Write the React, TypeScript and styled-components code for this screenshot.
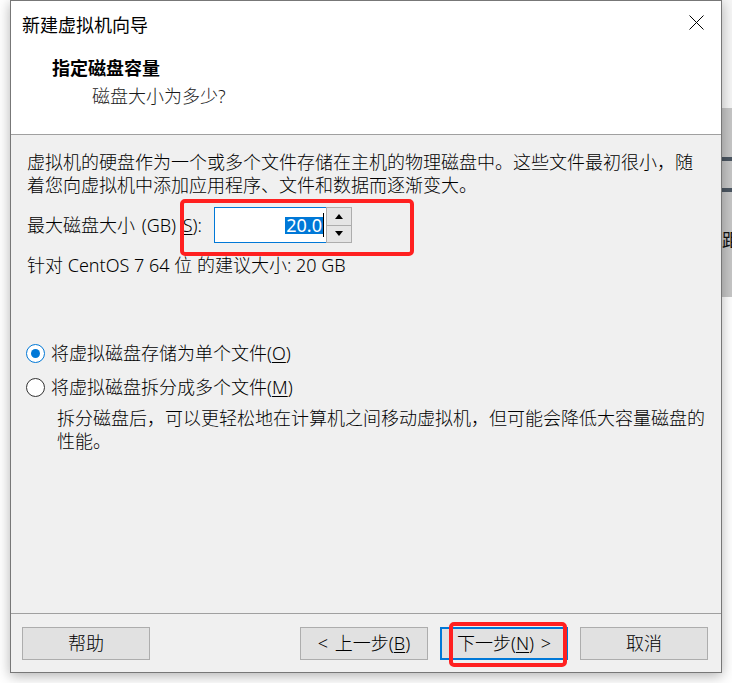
import React from "react";
import styled, { createGlobalStyle } from "styled-components";

const GlobalStyle = createGlobalStyle`
  html, body {
    margin: 0;
    padding: 0;
    background: #ffffff;
  }
  body {
    font-family: "Noto Sans", "Noto Sans CJK SC", sans-serif;
    font-size: 18px;
    font-weight: 300;
    color: #000000;
  }
  #root {
    width: 732px;
    height: 683px;
    overflow: hidden;
  }
`;

const Desktop = styled.div`
  display: flex;
  width: 732px;
  height: 683px;
  padding-left: 10px;
  box-sizing: border-box;
  background: #ffffff;
  overflow: hidden;
`;

const Window = styled.div`
  position: relative;
  z-index: 1;
  flex-shrink: 0;
  width: 712px;
  height: 673px;
  box-sizing: border-box;
  border: 1px solid #777777;
  background: #f0f0f0;
  display: flex;
  flex-direction: column;
  box-shadow: 0 3px 12px rgba(0, 0, 0, 0.3);
`;

const Header = styled.div`
  flex-shrink: 0;
  height: 134px;
  box-sizing: border-box;
  background: #ffffff;
  border-bottom: 1px solid #a0a0a0;
  display: flex;
  flex-direction: column;
`;

const TitleBar = styled.div`
  height: 46px;
  display: flex;
  align-items: center;
  justify-content: space-between;
  padding: 0 17px 0 11px;
`;

const TitleText = styled.span`
  font-family: "Noto Sans CJK SC", sans-serif;
  font-size: 18px;
  font-weight: 400;
  line-height: 24px;
  color: #000;
`;

const CloseIcon = styled.svg`
  display: block;
  margin-top: -3px;
`;

const PageHeading = styled.div`
  margin-top: 7px;
  padding-left: 41px;
  font-weight: 700;
  line-height: 28px;
`;

const PageSubheading = styled.div`
  padding-left: 81px;
  line-height: 28px;
  color: #1a1a1a;
`;

const Body = styled.div`
  flex: 1;
  padding: 16px 13px 0 16px;
  display: flex;
  flex-direction: column;
`;

const Paragraph = styled.p`
  margin: 0;
  line-height: 23px;
`;

const SizeRow = styled.div`
  margin-top: 10px;
  height: 36px;
  display: flex;
  align-items: center;
`;

const SizeLabel = styled.label`
  flex-shrink: 0;
  width: 187px;
  line-height: 23px;
  white-space: nowrap;
  word-spacing: 2px;
`;

const SpinBox = styled.div`
  display: flex;
  height: 36px;
`;

const NumberField = styled.div`
  width: 112px;
  box-sizing: border-box;
  border: 1px solid #0078d7;
  border-right: none;
  background: #ffffff;
  display: flex;
  align-items: center;
  justify-content: flex-end;
  padding-right: 2px;
`;

const SelectedValue = styled.span`
  display: inline-block;
  background: #0078d7;
  color: #ffffff;
  font-weight: 400;
  line-height: 17px;
  height: 17px;
  padding: 0 1px;
`;

const Caret = styled.span`
  display: inline-block;
  width: 1px;
  height: 24px;
  background: #000;
`;

const SpinButtons = styled.div`
  width: 26px;
  display: flex;
  flex-direction: column;
`;

const SpinButton = styled.div<{ $down?: boolean }>`
  flex: 1;
  box-sizing: border-box;
  border: 1px solid #adadad;
  border-top: ${(p) => (p.$down ? "none" : "1px solid #adadad")};
  background: #e5e5e5;
  display: flex;
  align-items: center;
  justify-content: center;
  &::after {
    content: "";
    width: 0;
    height: 0;
    border-left: 4px solid transparent;
    border-right: 4px solid transparent;
    ${(p) =>
      p.$down
        ? "border-top: 5px solid #000;"
        : "border-bottom: 5px solid #000;"}
  }
`;

const Recommendation = styled.div`
  margin-top: 11px;
  line-height: 23px;
`;

const RadioGroup = styled.div`
  margin-top: 63px;
  display: flex;
  flex-direction: column;
  gap: 8px;
`;

const RadioRow = styled.label`
  height: 26px;
  display: flex;
  align-items: center;
  gap: 6px;
  margin-left: -1px;
`;

const RadioDot = styled.span<{ $checked?: boolean }>`
  flex-shrink: 0;
  width: 19px;
  height: 19px;
  box-sizing: border-box;
  border-radius: 50%;
  border: 1px solid ${(p) => (p.$checked ? "#0078d7" : "#333333")};
  background: #ffffff;
  display: flex;
  align-items: center;
  justify-content: center;
  &::after {
    content: "";
    display: ${(p) => (p.$checked ? "block" : "none")};
    width: 9px;
    height: 9px;
    border-radius: 50%;
    background: #0078d7;
  }
`;

const RadioText = styled.span`
  line-height: 23px;
  white-space: nowrap;
`;

const Description = styled.p`
  margin: 7px 0 0 0;
  padding-left: 30px;
  line-height: 23px;
`;

const Footer = styled.div`
  flex-shrink: 0;
  height: 59px;
  box-sizing: border-box;
  border-top: 1px solid #a0a0a0;
  padding: 13px 13px 0 11px;
  display: flex;
  align-items: flex-start;
  gap: 12px;
`;

const Button = styled.button<{ $default?: boolean; $pushRight?: boolean }>`
  width: 128px;
  height: 33px;
  box-sizing: border-box;
  margin: 0;
  margin-left: ${(p) => (p.$pushRight ? "auto" : "0")};
  padding: 0;
  border: ${(p) => (p.$default ? "2px solid #0078d7" : "1px solid #adadad")};
  background: #e1e1e1;
  font-family: "Noto Sans", "Noto Sans CJK SC", sans-serif;
  font-size: 18px;
  font-weight: 300;
  line-height: 23px;
  color: #000;
  display: flex;
  align-items: center;
  justify-content: center;
  word-spacing: 2px;
`;

const Mnemonic = styled.span`
  text-decoration: underline;
  text-underline-offset: 2px;
`;

const Annotation = styled.div<{ $left: number; $top: number; $w: number; $h: number }>`
  position: absolute;
  left: ${(p) => p.$left}px;
  top: ${(p) => p.$top}px;
  width: ${(p) => p.$w}px;
  height: ${(p) => p.$h}px;
  box-sizing: border-box;
  border: 4px solid #ff2020;
  border-radius: 5px;
  pointer-events: none;
`;

const BackdropStrip = styled.div`
  flex-shrink: 0;
  width: 10px;
  display: flex;
  flex-direction: column;
`;

const StripTop = styled.div`
  height: 108px;
  background: #f6f6f6;
`;

const StripPanel = styled.div`
  height: 189px;
  background: #c6c6c6;
  display: flex;
  flex-direction: column;
  overflow: hidden;
`;

const StripBar = styled.div<{ $gap: number }>`
  margin-top: ${(p) => p.$gap}px;
  height: 4px;
  background: #4b5661;
`;

const StripGlyph = styled.div`
  margin-top: 36px;
  font-family: "Noto Sans CJK SC", sans-serif;
  font-size: 18px;
  font-weight: 400;
  line-height: 22px;
  white-space: nowrap;
  color: #111;
`;

const StripBottom = styled.div`
  flex: 1;
  background: #ffffff;
`;

export default function App() {
  return (
    <>
      <GlobalStyle />
      <Desktop>
        <Window>
          <Header>
            <TitleBar>
              <TitleText>新建虚拟机向导</TitleText>
              <CloseIcon width="15" height="15" viewBox="0 0 15 15">
                <path
                  d="M0.5 0.5 L14.5 14.5 M14.5 0.5 L0.5 14.5"
                  stroke="#000"
                  strokeWidth="1"
                  fill="none"
                />
              </CloseIcon>
            </TitleBar>
            <PageHeading>指定磁盘容量</PageHeading>
            <PageSubheading>磁盘大小为多少?</PageSubheading>
          </Header>

          <Body>
            <Paragraph>
              虚拟机的硬盘作为一个或多个文件存储在主机的物理磁盘中。这些文件最初很小，随着您向虚拟机中添加应用程序、文件和数据而逐渐变大。
            </Paragraph>

            <SizeRow>
              <SizeLabel>
                最大磁盘大小 (GB) <Mnemonic>S</Mnemonic>):
              </SizeLabel>
              <SpinBox>
                <NumberField>
                  <SelectedValue>20.0</SelectedValue>
                  <Caret />
                </NumberField>
                <SpinButtons>
                  <SpinButton />
                  <SpinButton $down />
                </SpinButtons>
              </SpinBox>
            </SizeRow>

            <Recommendation>针对 CentOS 7 64 位 的建议大小: 20 GB</Recommendation>

            <RadioGroup>
              <RadioRow>
                <RadioDot $checked />
                <RadioText>
                  将虚拟磁盘存储为单个文件(<Mnemonic>O</Mnemonic>)
                </RadioText>
              </RadioRow>
              <RadioRow>
                <RadioDot />
                <RadioText>
                  将虚拟磁盘拆分成多个文件(<Mnemonic>M</Mnemonic>)
                </RadioText>
              </RadioRow>
            </RadioGroup>

            <Description>
              拆分磁盘后，可以更轻松地在计算机之间移动虚拟机，但可能会降低大容量磁盘的性能。
            </Description>
          </Body>

          <Footer>
            <Button>帮助</Button>
            <Button $pushRight>
              &lt; 上一步(<Mnemonic>B</Mnemonic>)
            </Button>
            <Button $default>
              下一步(<Mnemonic>N</Mnemonic>) &gt;
            </Button>
            <Button>取消</Button>
          </Footer>

          <Annotation $left={169} $top={198} $w={234} $h={57} />
          <Annotation $left={438} $top={621} $w={118} $h={45} />
        </Window>

        <BackdropStrip>
          <StripTop />
          <StripPanel>
            <StripBar $gap={49} />
            <StripBar $gap={27} />
            <StripGlyph>距</StripGlyph>
          </StripPanel>
          <StripBottom />
        </BackdropStrip>
      </Desktop>
    </>
  );
}
